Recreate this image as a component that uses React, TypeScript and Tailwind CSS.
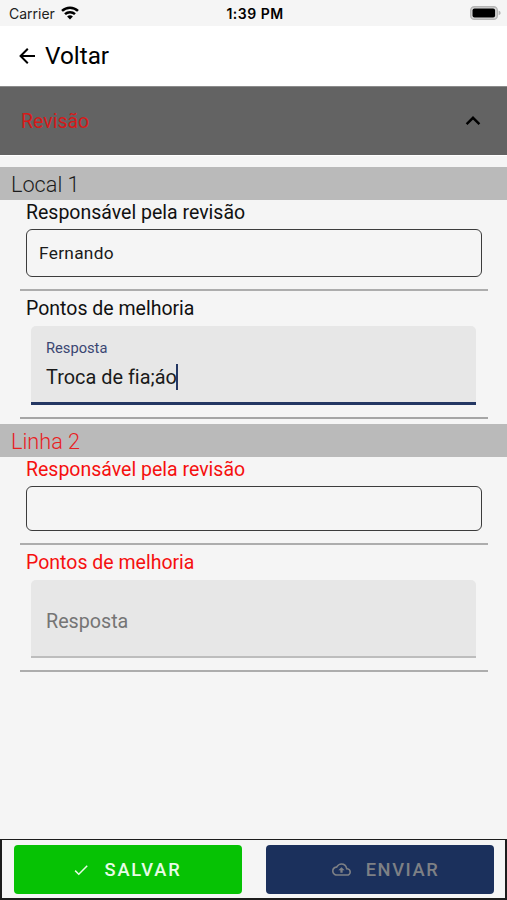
import type { ReactNode } from "react";

import { MdOutlineCloudUpload } from "react-icons/md";

const StatusBar = () => (
    <div className="h-[26px] shrink-0 grid grid-cols-3 items-center pt-px pl-[9px] pr-[6px] font-['Inter'] text-[#222]">
        <div className="flex items-center gap-[6px] text-[14px]">
            <span>Carrier</span>
            <svg className="-mt-[2px]" width="18" height="14" viewBox="0 0 18 14" fill="none" stroke="#000" strokeWidth="2.5">
                <path d="M1 4.9a11.6 11.6 0 0 1 16 0" />
                <path d="M4 8.2a7.3 7.3 0 0 1 10 0" />
                <path d="M9 13.5 6.1 10.6a4.1 4.1 0 0 1 5.8 0z" fill="#000" stroke="none" />
            </svg>
        </div>
        <span className="text-center text-[14px] font-semibold tracking-[0.5px] text-black whitespace-nowrap">1:39 PM</span>
        <svg className="justify-self-end -mt-px" width="31" height="14" viewBox="0 0 31 14">
            <rect x="0.7" y="0.7" width="26.6" height="12.6" rx="3.6" fill="#d8d8d8" stroke="#b5b5b5" strokeWidth="1.4" />
            <rect x="2.5" y="2.4" width="22.6" height="9.2" rx="2" fill="#000" />
            <path d="M28.6 4.8c1.4.3 2 1.2 2 2.2s-.6 1.9-2 2.2z" fill="#b5b5b5" />
        </svg>
    </div>
);

const SectionTitle = ({ children, error }: { children: ReactNode; error?: boolean }) => (
    <h2 className={`h-[33px] pl-[11px] text-[21.7px] leading-[36px] font-light bg-[#bababa] ${error ? "text-[#e8201f]" : "text-[#1c1c1c]"}`}>
        {children}
    </h2>
);

const Label = ({ children, error }: { children: ReactNode; error?: boolean }) => (
    <p className={`h-6 pl-[6px] text-[19.5px] leading-[26px] ${error ? "text-[#f5100f]" : "text-[#111]"}`}>{children}</p>
);

export default function App() {
    return (
        <div className="w-full h-screen flex flex-col overflow-hidden bg-[#f5f5f5] font-['Roboto',sans-serif]">
            <StatusBar />

            <header className="h-[60px] shrink-0 flex items-center gap-[6px] pl-[15px] bg-white text-black">
                <svg width="24" height="24" viewBox="0 0 24 24" fill="currentColor">
                    <path d="M20 11v2H8l5.5 5.5-1.42 1.42L4.16 12l7.92-7.92L13.5 5.5 8 11h12z" />
                </svg>
                <h1 className="text-[24.3px] leading-none">Voltar</h1>
            </header>

            <button className="h-[69px] shrink-0 flex items-center justify-between pl-[21px] pr-[22px] bg-[#636363] border-t border-[#8b8b8b] text-[19.5px] text-[#d61a1a]">
                <span className="pt-[2px]">Revisão</span>
                <svg width="24" height="24" viewBox="0 0 24 24" fill="none" stroke="#000" strokeWidth="2.4">
                    <path d="m5.6 15.2 6.4-6.4 6.4 6.4" />
                </svg>
            </button>
            <div className="h-px shrink-0 bg-white" />

            <main className="flex-1 pt-[11px]">
                <SectionTitle>Local 1</SectionTitle>
                <div className="ml-5 mr-[19px] pb-[12px] border-b-2 border-[#adadad]">
                    <Label>Responsável pela revisão</Label>
                    <div className="h-[48px] mt-[5px] mx-[6px] flex items-center pt-[2px] pl-[12px] border-[1.5px] border-[#3c3c3c] rounded-[6px] text-[17.3px] tracking-[0.3px] text-[#1a1a1a]">
                        Fernando
                    </div>
                </div>
                <div className="ml-5 mr-[19px] pt-[5px] pb-[12px] border-b-2 border-[#a6a6a6]">
                    <Label>Pontos de melhoria</Label>
                    <div className="h-[79px] mt-[6px] ml-[11px] mr-[12px] pt-[13px] pl-[15px] bg-[#e7e7e7] border-b-[3px] border-[#243763] rounded-t-[5px]">
                        <p className="text-[14.7px] leading-[18px] text-[#3a4672]">Resposta</p>
                        <div className="flex items-center mt-[7px] text-[19.9px] leading-[28px] text-[#1a1a1a] [font-variant-ligatures:none]">
                            Troca de fia;áo
                            <span className="w-[2px] h-[26px] -ml-px -mt-[2px] bg-[#243763]" />
                        </div>
                    </div>
                </div>

                <div className="h-[5px]" />
                <SectionTitle error>Linha 2</SectionTitle>
                <div className="ml-5 mr-[19px] pb-[12px] border-b-2 border-[#adadad]">
                    <Label error>Responsável pela revisão</Label>
                    <div className="h-[45px] mt-[5px] mx-[6px] border-[1.5px] border-[#3c3c3c] rounded-[6px]" />
                </div>
                <div className="ml-5 mr-[19px] pt-[5px] pb-[12px] border-b-2 border-[#adadad]">
                    <Label error>Pontos de melhoria</Label>
                    <div className="h-[78px] mt-[6px] ml-[11px] mr-[12px] flex items-center pt-[7px] pl-[15px] bg-[#e7e7e7] border-b-2 border-[#bdbdbd] rounded-t-[5px] text-[19.7px] text-[#757575]">
                        Resposta
                    </div>
                </div>
            </main>

            <footer className="h-[61px] shrink-0 grid grid-cols-2 gap-6 pt-[5px] pb-[4px] pl-3 pr-[11px] border-2 border-t-[1.5px] border-[#1c1c1c]">
                <button className="flex items-center justify-center gap-[15px] pr-[3px] rounded-[4px] bg-[#06c204] text-[18.3px] font-medium tracking-[1.8px] text-[#e8fbe6]">
                    <svg width="18" height="18" viewBox="0 0 24 24" fill="currentColor">
                        <path d="M21 7 9 19l-5.5-5.5 1.41-1.41L9 16.17 19.59 5.59z" />
                    </svg>
                    SALVAR
                </button>
                <button className="flex items-center justify-center gap-[15px] pl-[11px] rounded-[4px] bg-[#1b305c] text-[18.3px] font-medium tracking-[1.6px] text-[#7e8085]">
                    <MdOutlineCloudUpload className="w-[19px] h-[19px]" />
                    ENVIAR
                </button>
            </footer>
        </div>
    );
}
